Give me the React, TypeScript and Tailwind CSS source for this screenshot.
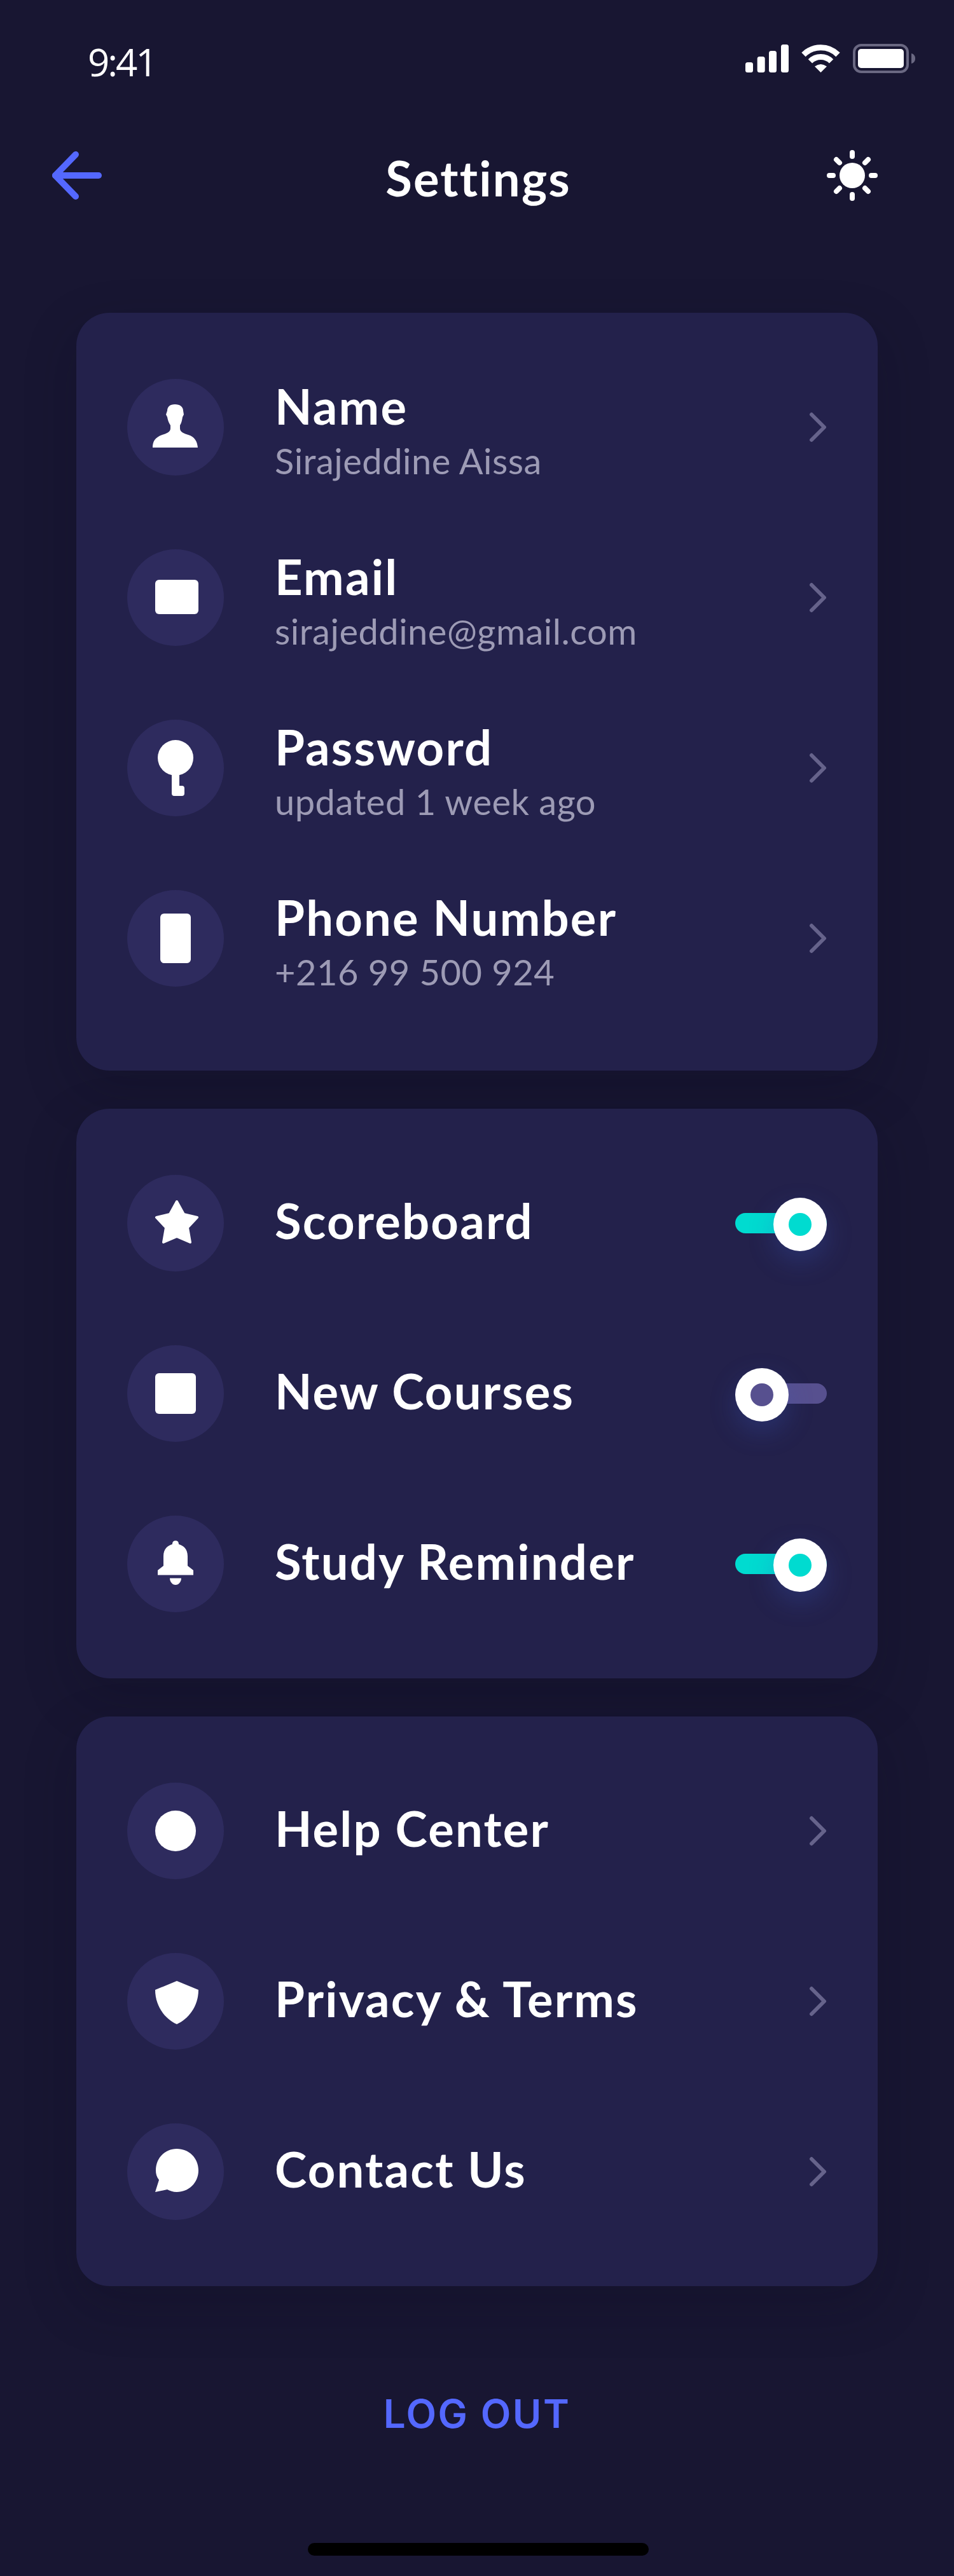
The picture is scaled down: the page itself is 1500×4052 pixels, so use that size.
import type { ReactNode } from "react";

const white = "#ffffff";

function Circle({ children }: { children: ReactNode }) {
  return (
    <div className="w-[152px] h-[152px] shrink-0 rounded-full bg-[#2e2b5e]">
      <svg viewBox="0 0 152 152" className="w-[152px] h-[152px] block" fill={white}>
        {children}
      </svg>
    </div>
  );
}

function Chevron() {
  return (
    <svg viewBox="0 0 30 50" className="w-[30px] h-[50px] shrink-0" fill="none" stroke="#66638b" strokeWidth="6" strokeLinecap="round" strokeLinejoin="round">
      <path d="M6 5 L26 25 L6 45" />
    </svg>
  );
}

function Toggle({ on }: { on: boolean }) {
  return (
    <div className="relative w-[144px] h-[84px] shrink-0">
      <div className={`absolute left-0 top-[26px] w-[144px] h-[32px] rounded-full ${on ? "bg-[#00dbd0]" : "bg-[#57508f]"}`} />
      <div className={`absolute top-[2px] w-[84px] h-[84px] flex items-center justify-center rounded-full bg-white shadow-[0_16px_40px_rgba(55,85,190,0.3)] ${on ? "left-[60px]" : "left-0"}`}>
        <div className={`w-[36px] h-[36px] rounded-full ${on ? "bg-[#00dbd0]" : "bg-[#57508f]"}`} />
      </div>
    </div>
  );
}

function Row({ icon, title, sub, right }: { icon: ReactNode; title: string; sub?: string; right: ReactNode }) {
  return (
    <div className="flex items-center h-[152px]">
      <Circle>{icon}</Circle>
      <div className={`flex-1 ml-[80px] flex flex-col ${sub ? "pt-[8px]" : "pb-[8px]"}`}>
        <div className="text-[76px] leading-[84px] font-bold tracking-[2.2px] text-white">{title}</div>
        {sub && <div className="mt-[14px] text-[56px] leading-[60px] text-[#9d9bb5] tracking-[0.5px]">{sub}</div>}
      </div>
      {right}
    </div>
  );
}

function Card({ children, last }: { children: ReactNode; last?: boolean }) {
  return (
    <div className={`mx-[120px] pl-[80px] pr-[80px] pt-[104px] flex flex-col gap-[116px] rounded-[52px] bg-[#23214b] shadow-[0_30px_80px_rgba(10,10,30,0.25)] ${last ? "pb-[104px]" : "pb-[132px]"}`}>
      {children}
    </div>
  );
}

const icons = {
  person: <path d="M63 50 C63 44 67 40 75 40 C83 40 88 44 88 50 L89 56 L87 60 C86 66 85 70 83 73 L83 78 C83 84 90 86 96 88 C106 91 110 98 111 108 L40 108 C40 98 44 92 55 88 C61 86 68 84 68 78 L68 73 C66 70 64 66 63 60 L61 56 Z" />,
  mail: <rect x="44" y="48" width="68" height="54" rx="6" />,
  key: (
    <>
      <circle cx="76" cy="60" r="28" />
      <path d="M70 80 V116 Q70 120 74 120 H86 Q90 120 90 116 V108 Q90 104 86 104 H82 V80 Z" />
    </>
  ),
  phone: <rect x="52" y="37" width="48" height="78" rx="6" />,
  star: <path d="M78 42 L89 62 L110 67 L95 83 L99 106 L78 97 L57 106 L61 83 L46 67 L67 62 Z" stroke={white} strokeWidth="4" strokeLinejoin="round" />,
  square: <rect x="44" y="44" width="64" height="64" rx="6" />,
  bell: (
    <>
      <path d="M48 93.6 V86 L57 79 V64 C57 52 64 47 71 45 C71 41 73 39.5 76 39.5 C79 39.5 81 41 81 45 C88 47 95 52 95 64 V79 L104 86 V93.6 Z" />
      <path d="M67 98.5 H85 C85 104 81 109 76 109 C71 109 67 104 67 98.5 Z" />
    </>
  ),
  help: <circle cx="76" cy="76" r="32" />,
  shield: <path d="M78 44 L112 58 C112 84 96 104 78 112 C60 104 44 84 44 58 Z" />,
  chat: <path d="M78 40 C96.5 40 112 54 112 74 C112 94 96 108 78 108 C72 108 67 106 63 104 L44 108 L50 89 C46 84 45 79 45 74 C45 54 60 40 78 40 Z" />,
};

export default function App() {
  return (
    <div className="w-[1500px] h-[4052px] relative overflow-hidden bg-[#181632] font-['Lato',sans-serif]">
      {/* status bar */}
      <div className="h-[184px] flex items-center justify-between pl-[138px] pr-[61px]">
        <span className="mt-[10px] text-[60px] tracking-[-3px] text-white font-['Open_Sans',sans-serif]">9:41</span>
        <div className="flex items-center gap-[20px]">
          <svg viewBox="0 0 68 44" className="w-[68px] h-[44px]" fill={white}>
            <rect x="0" y="28" width="12" height="16" rx="3.5" />
            <rect x="18.7" y="19" width="12" height="25" rx="3.5" />
            <rect x="37" y="10" width="12" height="34" rx="3.5" />
            <rect x="56" y="0" width="12" height="44" rx="3.5" />
          </svg>
          <svg viewBox="0 0 61 44" className="w-[61px] h-[44px]" fill="none" stroke={white} strokeWidth="9">
            <path d="M3.5 16 A38 38 0 0 1 57.5 16" />
            <path d="M13.9 26.4 A23.5 23.5 0 0 1 47.1 26.4" />
            <path d="M30.5 44 L21 34.5 Q30.5 27.5 40 34.5 Z" fill={white} stroke="none" />
          </svg>
          <svg viewBox="0 0 98 46" className="w-[98px] h-[46px]" fill="none">
            <rect x="2" y="2" width="84" height="42" rx="11" stroke="#6a6882" strokeWidth="4" />
            <rect x="8" y="8" width="72" height="30" rx="5" fill={white} />
            <path d="M92 15 C96 16 98 19 98 23 C98 27 96 30 92 31 Z" fill="#6a6882" />
          </svg>
        </div>
      </div>

      {/* header */}
      <div className="h-[184px] grid grid-cols-[1fr_auto_1fr] items-center">
        <div className="pl-[80px]">
          <svg viewBox="0 0 80 80" className="w-[80px] h-[80px]" fill="none" stroke="#5468ff" strokeWidth="10" strokeLinecap="round" strokeLinejoin="round">
            <path d="M7 40 H75" />
            <path d="M39 7 L7 40 L39 73" />
          </svg>
        </div>
        <div className="mt-[8px] pl-[4px] text-[76px] font-bold tracking-[2.2px] text-white text-center">Settings</div>
        <div className="flex justify-end pr-[120px]">
          <svg viewBox="0 0 80 80" className="w-[80px] h-[80px]" fill={white} stroke="none">
            <circle cx="40" cy="40" r="20" />
            <g stroke={white} strokeWidth="8" strokeLinecap="round">
              <path d="M40 4 V10" />
              <path d="M40 70 V76" />
              <path d="M4 40 H10" />
              <path d="M70 40 H76" />
              <path d="M15 15 L20 20" />
              <path d="M65 15 L60 20" />
              <path d="M15 65 L20 60" />
              <path d="M65 65 L60 60" />
            </g>
          </svg>
        </div>
      </div>

      <div className="mt-[124px] flex flex-col gap-[60px]">
        <Card>
          <Row icon={icons.person} title="Name" sub="Sirajeddine Aissa" right={<Chevron />} />
          <Row icon={icons.mail} title="Email" sub="sirajeddine@gmail.com" right={<Chevron />} />
          <Row icon={icons.key} title="Password" sub="updated 1 week ago" right={<Chevron />} />
          <Row icon={icons.phone} title="Phone Number" sub="+216 99 500 924" right={<Chevron />} />
        </Card>
        <Card last>
          <Row icon={icons.star} title="Scoreboard" right={<Toggle on />} />
          <Row icon={icons.square} title="New Courses" right={<Toggle on={false} />} />
          <Row icon={icons.bell} title="Study Reminder" right={<Toggle on />} />
        </Card>
        <Card last>
          <Row icon={icons.help} title="Help Center" right={<Chevron />} />
          <Row icon={icons.shield} title="Privacy & Terms" right={<Chevron />} />
          <Row icon={icons.chat} title="Contact Us" right={<Chevron />} />
        </Card>
      </div>

      <div className="mt-[164px] text-center text-[62px] leading-[74px] font-semibold tracking-[2.5px] text-[#5468ff] font-['Inter',sans-serif]">LOG OUT</div>

      {/* home indicator */}
      <div className="absolute left-[484px] top-[4000px] w-[536px] h-[20px] rounded-full bg-black" />
    </div>
  );
}
